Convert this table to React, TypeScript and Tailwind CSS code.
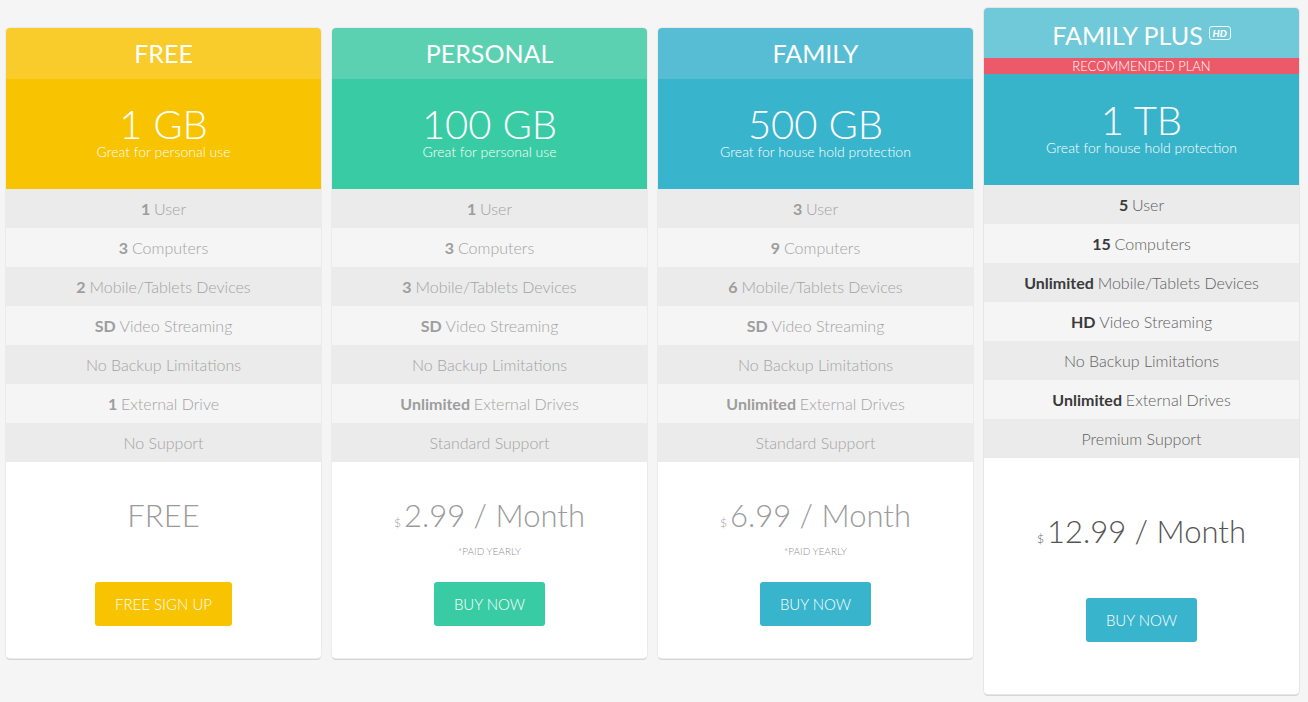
import React from "react";

type Feature = { bold?: string; text: string };

type Plan = {
  name: string;
  size: string;
  tagline: string;
  price: string;
  currency?: boolean;
  yearly?: boolean;
  cta: string;
  headBg: string;
  bodyBg: string;
  btnBg: string;
  features: Feature[];
};

const plans: Plan[] = [
  {
    name: "FREE",
    size: "1 GB",
    tagline: "Great for personal use",
    price: "FREE",
    cta: "FREE SIGN UP",
    headBg: "bg-[#f9cb2b]",
    bodyBg: "bg-[#f8c300]",
    btnBg: "bg-[#f8c300]",
    features: [
      { bold: "1", text: "User" },
      { bold: "3", text: "Computers" },
      { bold: "2", text: "Mobile/Tablets Devices" },
      { bold: "SD", text: "Video Streaming" },
      { text: "No Backup Limitations" },
      { bold: "1", text: "External Drive" },
      { text: "No Support" },
    ],
  },
  {
    name: "PERSONAL",
    size: "100 GB",
    tagline: "Great for personal use",
    price: "2.99 / Month",
    currency: true,
    yearly: true,
    cta: "BUY NOW",
    headBg: "bg-[#5cd1b1]",
    bodyBg: "bg-[#39cca4]",
    btnBg: "bg-[#39cca4]",
    features: [
      { bold: "1", text: "User" },
      { bold: "3", text: "Computers" },
      { bold: "3", text: "Mobile/Tablets Devices" },
      { bold: "SD", text: "Video Streaming" },
      { text: "No Backup Limitations" },
      { bold: "Unlimited", text: "External Drives" },
      { text: "Standard Support" },
    ],
  },
  {
    name: "FAMILY",
    size: "500 GB",
    tagline: "Great for house hold protection",
    price: "6.99 / Month",
    currency: true,
    yearly: true,
    cta: "BUY NOW",
    headBg: "bg-[#56bdd4]",
    bodyBg: "bg-[#38b4cc]",
    btnBg: "bg-[#38b4cc]",
    features: [
      { bold: "3", text: "User" },
      { bold: "9", text: "Computers" },
      { bold: "6", text: "Mobile/Tablets Devices" },
      { bold: "SD", text: "Video Streaming" },
      { text: "No Backup Limitations" },
      { bold: "Unlimited", text: "External Drives" },
      { text: "Standard Support" },
    ],
  },
];

const plusFeatures: Feature[] = [
  { bold: "5", text: "User" },
  { bold: "15", text: "Computers" },
  { bold: "Unlimited", text: "Mobile/Tablets Devices" },
  { bold: "HD", text: "Video Streaming" },
  { text: "No Backup Limitations" },
  { bold: "Unlimited", text: "External Drives" },
  { text: "Premium Support" },
];

function FeatureList({ items, dark }: { items: Feature[]; dark?: boolean }) {
  return (
    <ul>
      {items.map((f, i) => (
        <li
          key={i}
          className={`h-[39px] text-center text-[16px] leading-[39px] font-light ${
            i % 2 === 0 ? "bg-[#ebebeb]" : "bg-[#f5f5f5]"
          } ${dark ? "text-[#5e5e5e]" : "text-[#a3a3a3]"}`}
        >
          {f.bold && (
            <b className={`font-bold ${dark ? "text-[#3a3a3a]" : "text-[#9d9d9d]"}`}>{f.bold} </b>
          )}
          {f.text}
        </li>
      ))}
    </ul>
  );
}

function Price({ value, currency, dark }: { value: string; currency?: boolean; dark?: boolean }) {
  return (
    <div className={`h-[42px] text-center text-[31px] leading-[42px] font-light ${dark ? "text-[#555]" : "text-[#9b9b9b]"}`}>
      {currency && <span className="mr-[3px] text-[12px] leading-none">$</span>}
      {value}
    </div>
  );
}

function PlanCard({ plan }: { plan: Plan }) {
  return (
    <div className="mt-[20px] w-[315px] overflow-hidden rounded-[4px] bg-white shadow-[0_0_0_1px_#ebebeb,0_2px_0_#d6d6d6]">
      <div className={`flex h-[51px] items-center justify-center text-[25px] text-white ${plan.headBg}`}>
        {plan.name}
      </div>
      <div className={`flex h-[110px] flex-col items-center pt-[26px] text-white ${plan.bodyBg}`}>
        <div className="text-[40px] leading-[38px] font-light">{plan.size}</div>
        <div className="text-[14px] leading-[18px] font-light">{plan.tagline}</div>
      </div>
      <FeatureList items={plan.features} />
      <div className="flex flex-col items-center pt-[32px] pb-[32px]">
        <Price value={plan.price} currency={plan.currency} />
        <div className={`mt-[8px] h-[14px] text-[10px] leading-[14px] font-light text-[#8f8f8f] ${plan.yearly ? "" : "invisible"}`}>
          *PAID YEARLY
        </div>
        <button
          type="button"
          className={`mt-[24px] h-[44px] rounded-[3px] px-[20px] text-[15px] font-light text-white ${plan.btnBg}`}
        >
          {plan.cta}
        </button>
      </div>
    </div>
  );
}

function PlusCard() {
  return (
    <div className="w-[315px] overflow-hidden rounded-[4px] bg-white shadow-[0_0_0_1px_#e6e6e6,0_2px_0_#d6d6d6]">
      <div className="flex h-[50px] items-center justify-center pt-[5px] text-[25px] text-white bg-[#6fc9d8]">
        FAMILY PLUS
        <span className="mb-[6px] ml-[6px] flex h-[14px] w-[22px] items-center justify-center rounded-[3px] border-[1.5px] border-white/90 text-[10px] leading-none font-black italic">
          HD
        </span>
      </div>
      <div className="h-[16px] bg-[#ec5a6a] text-center text-[13px] leading-[16px] font-light text-white">
        RECOMMENDED PLAN
      </div>
      <div className="flex h-[111px] flex-col items-center pt-[27px] text-white bg-[#38b4ca]">
        <div className="text-[40px] leading-[38px] font-light">1 TB</div>
        <div className="text-[14px] leading-[18px] font-light">Great for house hold protection</div>
      </div>
      <FeatureList items={plusFeatures} dark />
      <div className="flex flex-col items-center pt-[52px] pb-[52px]">
        <Price value="12.99 / Month" currency dark />
        <button
          type="button"
          className="mt-[46px] h-[44px] rounded-[3px] px-[20px] text-[15px] font-light text-white bg-[#38b4cc]"
        >
          BUY NOW
        </button>
      </div>
    </div>
  );
}

export default function App() {
  return (
    <div className="min-h-[702px] bg-[#f5f5f5] font-['Lato','Liberation_Sans',sans-serif]">
      <div className="flex items-start gap-[11px] pt-[8px] pl-[6px]">
        {plans.map((p) => (
          <PlanCard key={p.name} plan={p} />
        ))}
        <PlusCard />
      </div>
    </div>
  );
}
